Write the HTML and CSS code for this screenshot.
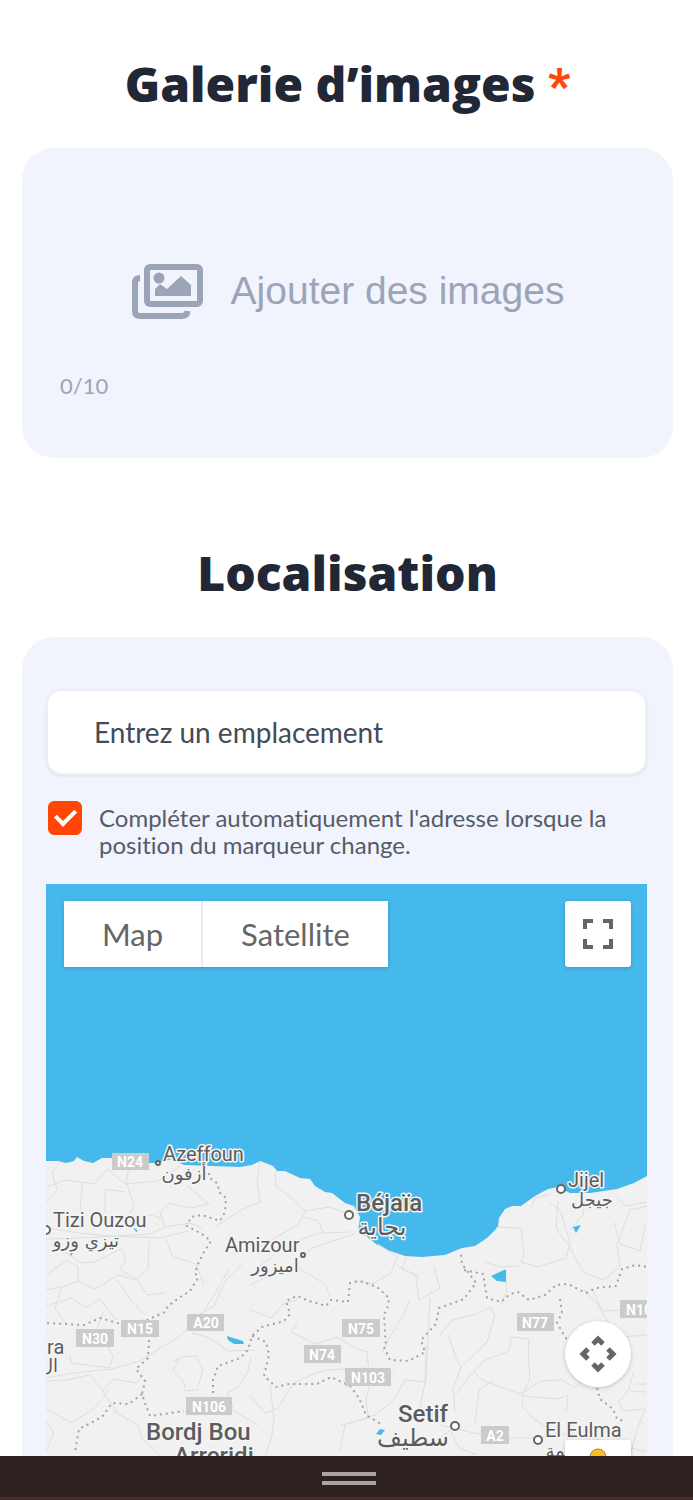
FILE: index.html
```html
<!DOCTYPE html>
<html lang="fr">
<head>
    <meta charset="UTF-8">
    <meta name="viewport" content="width=device-width, initial-scale=1.0">
    <title>Galerie et localisation</title>
    <link rel="stylesheet" href="styles.css">
</head>
<body>
    <main class="page">
        <section class="section">
            <h2>Galerie d’images <span class="required">*</span></h2>
            <div class="card gallery">
                <button class="add-images" type="button">
                    <svg class="images-icon" viewBox="0 0 72 58" aria-hidden="true">
                        <path d="M9 16Q4 16 4 21V49Q4 54 9 54H51Q56 54 56.500 49" fill="none" stroke="currentColor" stroke-width="6"/>
                        <rect x="16" y="5" width="53" height="37" rx="3" fill="none" stroke="currentColor" stroke-width="6"/>
                        <circle cx="28" cy="16" r="5.500" fill="currentColor"/>
                        <path d="M24 34V27L29 22L36 27L50 14L60 23V34Z" fill="currentColor"/>
                    </svg>
                    <span>Ajouter des images</span>
                </button>
                <p class="counter">0/10</p>
            </div>
        </section>

        <section class="section">
            <h2>Localisation</h2>
            <div class="card location">
                <input class="place" type="text" placeholder="Entrez un emplacement" aria-label="Entrez un emplacement">
                <div class="auto">
                    <input type="checkbox" id="auto" checked>
                    <label for="auto">Compléter automatiquement l'adresse lorsque la position du marqueur change.</label>
                </div>
                <div class="map">
                    <svg class="map-canvas" viewBox="46 884 601 640" preserveAspectRatio="xMidYMin slice" role="img" aria-label="Carte">
                        <rect class="sea" x="46" y="884" width="601" height="640"/>
                        <path class="land" d="M46 1161L58 1161L66 1163L74 1161L77 1157L84 1161L93 1163L102 1158L112 1158L130 1163L158 1163L172 1159L184 1165L240 1167L252 1165L260 1161L273 1166L277 1171L285 1171L300 1178L310 1179L315 1186L325 1192L332 1193L345 1203L354 1206L360 1217L358 1233L366 1236L376 1244L390 1251L405 1256L422 1257L445 1255L462 1248L475 1246L487 1238L498 1227L499 1218L505 1209L512 1206L521 1206L535 1196L548 1189L558 1187L570 1193L590 1193L617 1189L634 1183L647 1176V1524H46Z"/>
                        <g class="roads">
                            <path d="M46 1187L65 1180L94 1184L108 1169L125 1184L158 1181L180 1166M60 1162L52 1172L57 1190L46 1202M82 1185L80 1213M130 1163L126 1181L134 1206L128 1218L152 1215L164 1220M105 1213L105 1189L125 1192M187 1186L209 1204L190 1208L169 1203L160 1213L165 1227L190 1223L202 1228M215 1227L241 1210L260 1202L257 1183L260 1161M275 1171L276 1187L291 1197L305 1211L329 1207L347 1213M305 1211L298 1225L278 1236L258 1248M303 1217L318 1221L323 1232M46 1228L80 1233L110 1236L160 1238L188 1231M46 1239L100 1237L150 1234L165 1227"/>
                            <path d="M60 1249L82 1263L94 1262L121 1249L126 1259L120 1270L137 1279L148 1269L149 1242M46 1275L67 1260L78 1267L78 1281L95 1289L118 1275L137 1280L147 1295L165 1293M46 1290L62 1287L78 1281M46 1306L72 1298L86 1308L100 1299L116 1320M62 1287L55 1308L66 1324M117 1280L131 1300L145 1315M166 1239L173 1257L196 1264L204 1285M230 1268L217 1290L204 1311L180 1336L154 1352L140 1361L112 1369L74 1373L46 1378M244 1262L226 1280L214 1306L190 1320M258 1267L292 1242L320 1233L350 1232M250 1285L275 1273L298 1268L325 1284L330 1297M301 1258L312 1248L354 1234M378 1244L397 1257L391 1273L372 1284L354 1280M397 1265L416 1276L419 1300L440 1288L434 1267M407 1256L402 1269L419 1276"/>
                            <path d="M70 1354L71 1363L110 1368L113 1356L97 1328L104 1311M46 1381L66 1380L90 1375L102 1390L118 1413M102 1390L114 1379L136 1383L145 1374M46 1409L72 1423L95 1408L109 1390M174 1361L182 1357L196 1356L203 1369L197 1390L185 1391L184 1382L173 1371L179 1359M192 1333L210 1338L228 1351L255 1350M251 1357L248 1371L238 1388L227 1393L234 1411L258 1425M46 1421L54 1433L46 1451M113 1411L138 1425L142 1438L161 1456M250 1395L265 1413L278 1408L293 1384L304 1378L325 1370L365 1368L394 1373M270 1386L274 1418L272 1435L265 1456M298 1321L291 1332L315 1344L338 1337L353 1347L367 1352L370 1384L366 1400L368 1418L345 1424L340 1451M340 1426L375 1415L394 1400L405 1380L426 1382L430 1297M250 1310L272 1318L283 1304L297 1300M410 1300L401 1319L389 1338L383 1352M426 1345L425 1382L420 1408L435 1415M448 1334L456 1358L461 1367L453 1389L455 1412"/>
                            <path d="M496 1228L499 1227L521 1228L524 1254L521 1262L537 1267L566 1258L570 1243L561 1212L549 1202M558 1201L556 1228L569 1246L583 1272L603 1280L620 1267L617 1244L630 1210L647 1206M530 1210L535 1198L550 1194M586 1197L583 1215L570 1230M617 1196L625 1206L647 1202M614 1222L620 1244L640 1251L645 1225M484 1262L500 1267L520 1266M504 1267L507 1290L501 1304M440 1335L452 1320L477 1314L490 1307L495 1316L487 1342L461 1367M455 1395L470 1376L483 1361L509 1351L511 1337L529 1339L528 1352L530 1378L523 1394L522 1406L533 1418L548 1429M474 1371L482 1380L520 1394L540 1381L562 1380L575 1388L594 1370M523 1396L558 1399L568 1395L566 1413M475 1423L479 1390L493 1380M440 1438L450 1430L459 1448L477 1455M440 1425L474 1433L508 1438L540 1438L571 1433L647 1452M584 1290L598 1305L610 1325M593 1290L602 1311L620 1310M608 1338L647 1335M633 1373L629 1389L619 1402L623 1411L645 1409L637 1430L630 1456M635 1384L647 1384M630 1391L647 1392"/>
                        </g>
                        <g class="borders">
                            <path d="M209 1173L209 1177L218 1184L219 1192L226 1198L225 1212L220 1221L214 1219L202 1215L191 1217L187 1226L202 1234L211 1241L204 1252L198 1264L195 1273L198 1278L190 1291L179 1298L168 1306L165 1312L147 1320L121 1324L100 1318L84 1325L46 1323"/>
                            <path d="M149 1340L148 1358L136 1369L145 1381L142 1394L145 1403L150 1416L184 1411M142 1394L129 1404L112 1403L102 1417L79 1429L75 1452M213 1393L213 1380L218 1366L240 1358L248 1350L252 1336L262 1327L284 1321L290 1314L286 1301L297 1296L309 1301L326 1306L331 1300L348 1302L350 1283L360 1281L377 1287L389 1298L388 1306L384 1315L386 1347M252 1336L266 1342L269 1355L264 1376L276 1387L289 1384L317 1384L331 1377L350 1386L359 1398L366 1415L381 1424M384 1347L390 1360L409 1361L425 1352L421 1340L436 1324L439 1308L464 1299L476 1283L462 1264L461 1253M464 1270L483 1274L487 1298L501 1302L510 1294L518 1292L529 1300L545 1295L556 1285L568 1284L586 1293L596 1288L616 1286L622 1269L635 1265L647 1267M560 1299L562 1313L557 1323L567 1340M597 1388L600 1399L613 1409L617 1419L624 1421"/>
                        </g>
                        <g class="lakes">
                            <path d="M491 1276L504 1270H506V1282L497 1281Z"/>
                            <path d="M573 1227L581 1225L576 1233Z"/>
                            <path d="M227 1336L243 1341L244 1344L234 1344L228 1340Z"/>
                            <path d="M376 1434L380 1429L385 1430L381 1435Z"/>
                            <path d="M133 1227L138 1231L136 1232Z"/>
                            <path d="M70 1252L73 1253L71 1256Z"/>
                        </g>
                        <g class="shields">
                            <rect x="112" y="1153" width="37" height="17"/><text x="130" y="1167">N24</text>
                            <rect x="76" y="1329" width="38" height="18"/><text x="95" y="1344">N30</text>
                            <rect x="121" y="1320" width="38" height="17"/><text x="140" y="1334">N15</text>
                            <rect x="187" y="1314" width="37" height="17"/><text x="206" y="1328">A20</text>
                            <rect x="342" y="1319" width="38" height="18"/><text x="361" y="1334">N75</text>
                            <rect x="304" y="1345" width="37" height="18"/><text x="322" y="1360">N74</text>
                            <rect x="345" y="1368" width="46" height="18"/><text x="368" y="1383">N103</text>
                            <rect x="186" y="1397" width="46" height="18"/><text x="209" y="1412">N106</text>
                            <rect x="517" y="1313" width="37" height="18"/><text x="535" y="1328">N77</text>
                            <rect x="481" y="1426" width="28" height="18"/><text x="495" y="1441">A2</text>
                            <rect x="620" y="1300" width="46" height="18"/><text x="643" y="1315">N102</text>
                        </g>
                        <g class="dots">
                            <circle cx="158" cy="1163" r="2"/>
                            <circle cx="46" cy="1230" r="4"/>
                            <circle cx="349" cy="1215" r="4"/>
                            <circle cx="303" cy="1255" r="2"/>
                            <circle cx="561" cy="1189" r="4"/>
                            <circle cx="455" cy="1426" r="4"/>
                            <circle cx="538" cy="1440" r="4"/>
                        </g>
                        <g class="labels">
                            <text x="163" y="1161">Azeffoun</text>
                            <text class="arabic" x="184" y="1180">أزفون</text>
                            <text x="53" y="1227">Tizi Ouzou</text>
                            <text class="arabic" x="86" y="1247">تيزي وزو</text>
                            <text x="225" y="1252">Amizour</text>
                            <text class="arabic" x="275" y="1272">اميزور</text>
                            <text class="city" x="356" y="1211">Béjaïa</text>
                            <text class="arabic big" x="382" y="1235">بجاية</text>
                            <text x="568" y="1187">Jijel</text>
                            <text class="arabic" x="592" y="1206">جيجل</text>
                            <text x="47" y="1354">ra</text>
                            <text class="arabic" x="49" y="1372">ال</text>
                            <text class="city" x="146" y="1440">Bordj Bou</text>
                            <text class="city" x="174" y="1464">Arreridj</text>
                            <text class="city" x="398" y="1422">Setif</text>
                            <text class="arabic big" x="413" y="1446">سطيف</text>
                            <text x="545" y="1437">El Eulma</text>
                            <text class="arabic" x="568" y="1457">العلمة</text>
                        </g>
                    </svg>
                    <div class="map-types">
                        <button type="button">Map</button>
                        <button type="button">Satellite</button>
                    </div>
                    <button class="map-button fullscreen" type="button" aria-label="Plein écran">
                        <svg viewBox="0 0 30 30" fill="none" stroke="#666" stroke-width="4" aria-hidden="true">
                            <path d="M2 10V2H10M20 2H28V10M28 20V28H20M10 28H2V20"/>
                        </svg>
                    </button>
                    <button class="map-button camera" type="button" aria-label="Déplacer la carte">
                        <svg viewBox="0 0 38 38" fill="none" stroke="#666" stroke-width="5" aria-hidden="true">
                            <path d="M14 9L19 4L24 9M14 29L19 34L24 29M9 14L4 19L9 24M29 14L34 19L29 24"/>
                        </svg>
                    </button>
                    <button class="map-button pegman" type="button" aria-label="Street View">
                        <svg viewBox="0 0 30 50" aria-hidden="true">
                            <circle cx="15" cy="9" r="8" fill="#fbbc2c" stroke="#a98432"/>
                            <path d="M6 20H24V36H20V48H10V36H6Z" fill="#fbbc2c"/>
                        </svg>
                    </button>
                </div>
            </div>
        </section>
    </main>
    <footer class="bottom-bar">
        <button class="handle" type="button" aria-label="Ouvrir le menu"></button>
    </footer>
</body>
</html>
```
FILE: styles.css
```css
* {
    box-sizing: border-box;
}

body {
    margin: 0;
    height: 100vh;
    display: flex;
    flex-direction: column;
    overflow: hidden;
    background: #fff;
    color: #212735;
    font-family: Lato, "Open Sans", sans-serif;
    font-variant-ligatures: none;
}

button {
    border: 0;
    padding: 0;
    cursor: pointer;
    font-family: inherit;
}

.page {
    flex: 1;
    min-height: 0;
    overflow: hidden;
    padding: 54px 20px 0 22px;
}

.section {
    margin-bottom: 85px;
}

h2 {
    margin: 0 0 34px;
    font-family: "Open Sans", sans-serif;
    font-size: 48px;
    line-height: 60px;
    font-weight: 800;
    text-align: center;
}

.required {
    color: #ff4605;
    font-family: Roboto, sans-serif;
    font-weight: 900;
    line-height: 1;
}

.card {
    background: #f1f4fc;
    border-radius: 32px;
}

.gallery {
    min-height: 310px;
    padding: 112px 38px 56px;
}

.add-images {
    display: flex;
    align-items: center;
    justify-content: center;
    gap: 28px;
    width: 100%;
    height: 62px;
    background: none;
    color: #9ca4b8;
    font-family: "Liberation Sans", Arial, sans-serif;
    font-size: 39px;
}

.images-icon {
    width: 72px;
    height: 58px;
}

.counter {
    margin: 50px 0 0;
    color: #9ca4b8;
    font-size: 22px;
    line-height: 28px;
}

.location {
    padding: 52px 26px 0 24px;
}

.place {
    display: block;
    width: 100%;
    height: 86px;
    padding: 0 46px;
    border: 2px solid #ebeff7;
    border-radius: 16px;
    background: #fff;
    box-shadow: 0 1px 3px rgba(0, 0, 0, 0.08);
    font-family: inherit;
    font-size: 28px;
}

.place::placeholder {
    color: #444b58;
    opacity: 1;
}

.auto {
    display: flex;
    align-items: flex-start;
    gap: 17px;
    margin: 26px 0 25px;
    padding-left: 2px;
    color: #555c69;
    font-size: 24px;
    line-height: 27px;
}

.auto label {
    padding: 3px 0 1px;
}

.auto input {
    appearance: none;
    flex: none;
    display: grid;
    place-items: center;
    width: 34px;
    height: 34px;
    margin: 0;
    border: 1px solid #ff4605;
    border-radius: 6px;
    background: #fff;
}

.auto input:checked {
    background: #ff4605;
}

.auto input:checked::after {
    content: "";
    width: 9px;
    height: 16px;
    margin-bottom: 6px;
    border: solid #fff;
    border-width: 0 4px 4px 0;
    transform: rotate(45deg);
}

/* map */
.map {
    position: relative;
    overflow: hidden;
}

.map-canvas {
    display: block;
    width: 100%;
}

.sea,
.lakes {
    fill: #46b9ec;
}

.land {
    fill: #f1f1f1;
}

.roads {
    fill: none;
    stroke: #dedede;
    stroke-width: 1;
    stroke-linejoin: round;
}

.borders {
    fill: none;
    stroke: #a2a2a2;
    stroke-width: 2;
    stroke-dasharray: 2 4;
}

.shields {
    fill: #cbcbcb;
    font-family: Roboto, sans-serif;
    font-size: 14px;
    font-weight: 700;
    text-anchor: middle;
}

.shields text {
    fill: #fff;
}

.dots {
    fill: #fff;
    stroke: #666;
    stroke-width: 2;
}

.labels {
    fill: #5c5c5c;
    stroke: #f5f5f5;
    stroke-width: 3;
    stroke-linejoin: round;
    paint-order: stroke;
    font-family: Roboto, sans-serif;
    font-size: 20px;
}

.labels .city {
    font-size: 24px;
    font-weight: 500;
}

.labels .arabic {
    font-family: "DejaVu Sans", sans-serif;
    font-size: 18px;
    text-anchor: middle;
}

.labels .big {
    font-size: 24px;
}

.map-types {
    position: absolute;
    top: 17px;
    left: 18px;
    display: flex;
    gap: 2px;
    border-radius: 3px;
    background: #e8edf2;
    box-shadow: 0 1px 4px rgba(0, 0, 0, 0.2);
}

.map-types button {
    height: 66px;
    padding: 0 38px;
    background: #fff;
    color: #666;
    font-size: 31px;
}

.map-button {
    position: absolute;
    right: 16px;
    display: grid;
    place-items: center;
    width: 66px;
    height: 66px;
    border-radius: 3px;
    background: #fff;
    box-shadow: 0 1px 4px rgba(0, 0, 0, 0.2);
}

.fullscreen {
    top: 17px;
}

.fullscreen svg {
    width: 30px;
}

.camera {
    top: 437px;
    border-radius: 50%;
}

.camera svg {
    width: 38px;
}

.pegman {
    top: 556px;
}

.pegman svg {
    width: 30px;
}

.bottom-bar {
    flex: none;
    display: flex;
    justify-content: center;
    align-items: center;
    height: 44px;
    padding: 4px 0 0 5px;
    background: #2e2221;
    border-bottom: 3px solid #4a2e2e;
}

.handle {
    width: 54px;
    height: 13px;
    border: solid #a7a4a4;
    border-width: 4px 0;
    background: none;
}
```
